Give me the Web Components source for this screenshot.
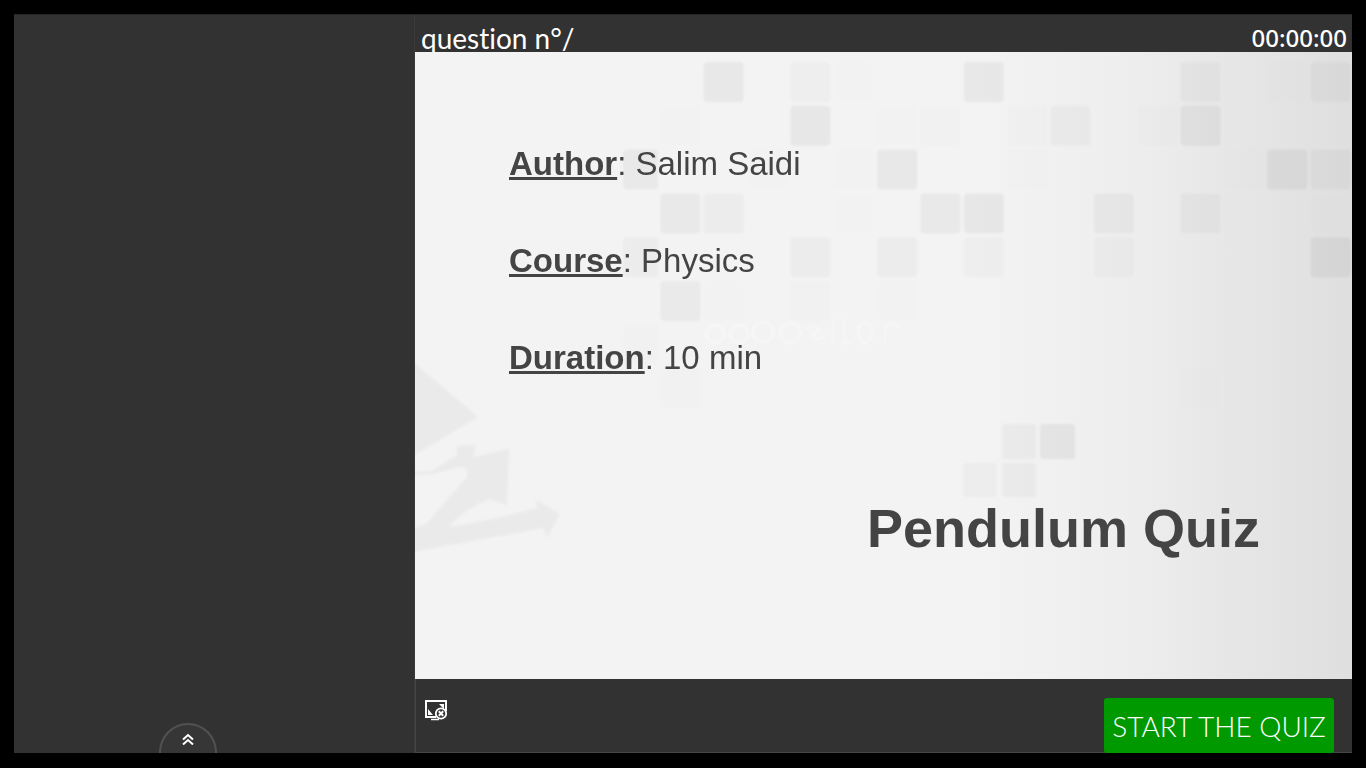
<!DOCTYPE html>
<html lang="en">
<head>
<meta charset="utf-8">
<title>Pendulum Quiz</title>
<style>
html, body { margin: 0; background: #000; }
</style>
</head>
<body>
<quiz-player>
  <quiz-sidebar slot="side"></quiz-sidebar>
  <quiz-header slot="head"><span>question n°/</span><span slot="time">00:00:00</span></quiz-header>
  <quiz-slide slot="slide">
    <quiz-fact label="Author">Salim Saidi</quiz-fact>
    <quiz-fact label="Course">Physics</quiz-fact>
    <quiz-fact label="Duration">10 min</quiz-fact>
    <span slot="title">Pendulum Quiz</span>
  </quiz-slide>
  <quiz-footer slot="foot">START THE QUIZ</quiz-footer>
</quiz-player>
<script>
function define(name, html, setup) {
  customElements.define(name, class extends HTMLElement {
    constructor() {
      super();
      this.attachShadow({ mode: 'open' }).innerHTML = html;
    }
    connectedCallback() { if (setup) setup(this, this.shadowRoot); }
  });
}

define('quiz-player', `
<style>
:host { display: grid; box-sizing: border-box; min-height: 100vh; padding: 14px 14px 15px;
  grid-template-columns: 401px minmax(0, 1fr); background: #000; color: #fff;
  font-family: Lato, "Liberation Sans", sans-serif; }
.side { display: grid; background: #323232; box-shadow: inset 0 1px #262626, inset -1px 0 #3a3a3a; }
main { display: grid; grid-template-rows: 38px minmax(0, 1fr) 74px; background: #323232; }
</style>
<div class="side"><slot name="side"></slot></div>
<main><slot name="head"></slot><slot name="slide"></slot><slot name="foot"></slot></main>`);

define('quiz-sidebar', `
<style>
:host { display: flex; align-items: flex-end; justify-content: center; padding-right: 53px; }
button { display: flex; justify-content: center; align-items: flex-start; width: 58px; height: 30px;
  padding: 8px 0 0; margin: 0; box-sizing: border-box;
  border: 2px solid #525252; border-bottom: 0; border-radius: 29px 29px 0 0; background: #363636; }
svg { display: block; }
</style>
<button type="button" aria-label="Expand">
<svg width="12" height="12" viewBox="0 0 12 12" fill="none" stroke="#fff" stroke-width="2"><path d="M1 6.500 6 2l5 4.500M1 11.500l5-4.500 5 4.500"/></svg>
</button>`);

define('quiz-header', `
<style>
:host { display: flex; justify-content: space-between; align-items: flex-end; box-sizing: border-box;
  padding: 0 5px 0 6px; background: #323232; box-shadow: inset 0 1px #262626; }
div { font-size: 28px; line-height: 28px; white-space: nowrap; font-variant-ligatures: none; }
time { font-family: "Noto Sans", "Open Sans", sans-serif; font-size: 24px; line-height: 28px; font-weight: 500; }
</style>
<div><slot></slot></div><time><slot name="time"></slot></time>`);

define('quiz-fact', `
<style>
:host { display: block; font-size: 33px; line-height: 37px; }
b { text-decoration: underline; text-decoration-skip-ink: none; text-decoration-thickness: 3px; }
</style>
<b></b>: <slot></slot>`, (el, root) => { root.querySelector('b').textContent = el.getAttribute('label'); });

define('quiz-slide', `
<style>
:host { display: flex; flex-direction: column; position: relative; box-sizing: border-box;
  padding: 93px 92px 120px 94px; background: #f3f3f3; color: #444; font-family: "Liberation Sans", Arial, sans-serif; }
slide-backdrop { position: absolute; inset: 0; }
.facts { position: relative; display: flex; flex-direction: column; gap: 60px; }
h1 { position: relative; margin: auto 0 0; text-align: right; font-size: 54px; line-height: 62px; }
</style>
<slide-backdrop></slide-backdrop>
<div class="facts"><slot></slot></div>
<h1><slot name="title"></slot></h1>`);

/* Tile pattern: [column, row, darkness] on a 43.3 x 43.8 grid. */
const TILES = [
  [2,0,10],[4,0,5],[5,0,1],[8,0,10],[13,0,6],[16,0,6],[15,0,1],
  [1,1,1],[4,1,11],[6,1,1],[7,1,2],[9,1,2],[10,1,6],[12,1,2],[13,1,11],
  [0,2,9],[3,2,1],[5,2,1],[6,2,10],[9,2,1],[15,2,11],[16,2,6],[14,2,1],
  [1,3,9],[2,3,6],[5,3,1],[7,3,9],[8,3,11],[11,3,8],[13,3,6],[16,3,1],
  [0,4,6],[4,4,6],[6,4,6],[8,4,5],[11,4,5],[16,4,11],
  [1,5,8],[2,5,1],[4,5,2],[6,5,1],[0,6,2],[1,7,2],[13,7,1]
];

define('slide-backdrop', `
<style>
:host { display: block; overflow: hidden; }
svg { display: block; width: 100%; height: 100%; }
</style>
<svg viewBox="0 0 937 627" preserveAspectRatio="none" aria-hidden="true">
  <defs>
    <linearGradient id="shade"><stop offset="0.6" stop-color="#f3f3f3"/><stop offset="0.76" stop-color="#eeeeee"/><stop offset="0.88" stop-color="#e6e6e6"/><stop offset="1" stop-color="#dfdfdf"/></linearGradient>
    <filter id="soft"><feGaussianBlur stdDeviation="0.8"/></filter>
  </defs>
  <rect width="937" height="627" fill="url(#shade)"/>
  <g filter="url(#soft)">
    <g id="tiles"></g>
    <g fill="#000">
      <rect x="587" y="372" width="34" height="35" rx="3" opacity=".03"/>
      <rect x="625" y="372" width="35" height="35" rx="3" opacity=".05"/>
      <rect x="548" y="411" width="34" height="34" rx="3" opacity=".022"/>
      <rect x="587" y="411" width="34" height="34" rx="3" opacity=".03"/>
    </g>
    <g fill="#eaeaea">
      <path d="M-2 310 63 365-2 404Z"/>
      <path d="M-2 420 17 419 42 403V394L60 393 59 405 94 397 92 453 75 447Q52 455 33 475Q70 470 122 456L121 448 145 462 132 485 128 476-2 500V477L12 471 52 425Q54 414 45 415L17 422-2 423Z"/>
    </g>
    <g fill="none" stroke="#f6f6f6" stroke-width="3">
      <circle cx="300" cy="282" r="9"/><circle cx="324" cy="282" r="9"/><circle cx="348" cy="280" r="10"/><circle cx="375" cy="281" r="10"/><path d="M390 278q8-8 15 0l-9 6q7 7 14-1M418 267v24M429 267v24h9M445 272q12-3 13 6t-9 14q-9-8-4-20M470 290v-16q10-5 15 2"/>
    </g>
  </g>
</svg>`, (el, root) => {
  const g = root.getElementById('tiles');
  for (const [c, r, d] of TILES) {
    const t = document.createElementNS('http://www.w3.org/2000/svg', 'rect');
    const x = c ? 202 + c * 43.35 : 208;
    t.setAttribute('x', x);
    t.setAttribute('y', 10 + r * 43.8);
    t.setAttribute('width', c ? 40 : 35);
    t.setAttribute('height', 40);
    t.setAttribute('rx', 4);
    t.setAttribute('opacity', d / 235);
    g.append(t);
  }
});

define('quiz-footer', `
<style>
:host { display: flex; justify-content: space-between; align-items: flex-end; box-sizing: border-box;
  padding: 0 18px 0 9px; background: #323232; box-shadow: inset 1px -1px #464646; }
button { border: 0; margin: 0; padding: 0; color: #fff; }
.screen { align-self: flex-start; margin-top: 20px; background: none; }
svg { display: block; }
.start { width: 230px; height: 55px; background: #090; border-radius: 3px;
  font: 300 28px/34px Lato, "Liberation Sans", sans-serif; white-space: nowrap; }
</style>
<button class="screen" type="button" aria-label="Exit full screen">
<svg width="24" height="22" viewBox="0 0 24 22" fill="none" stroke="#fff" stroke-width="2">
<path d="M12 18H2V2h20v10"/><path d="M7 20.500h8" stroke-width="1.500"/>
<path d="M15 5h5v5zM4 10v6h5z" fill="#fff" stroke="none"/>
<circle cx="17" cy="14.500" r="5.200" fill="#323232" stroke-width="1.800"/><path d="m14.800 12.300 4.400 4.400m0-4.400-4.400 4.400"/>
</svg></button>
<button class="start" type="button"><slot></slot></button>`);
</script>
</body>
</html>
